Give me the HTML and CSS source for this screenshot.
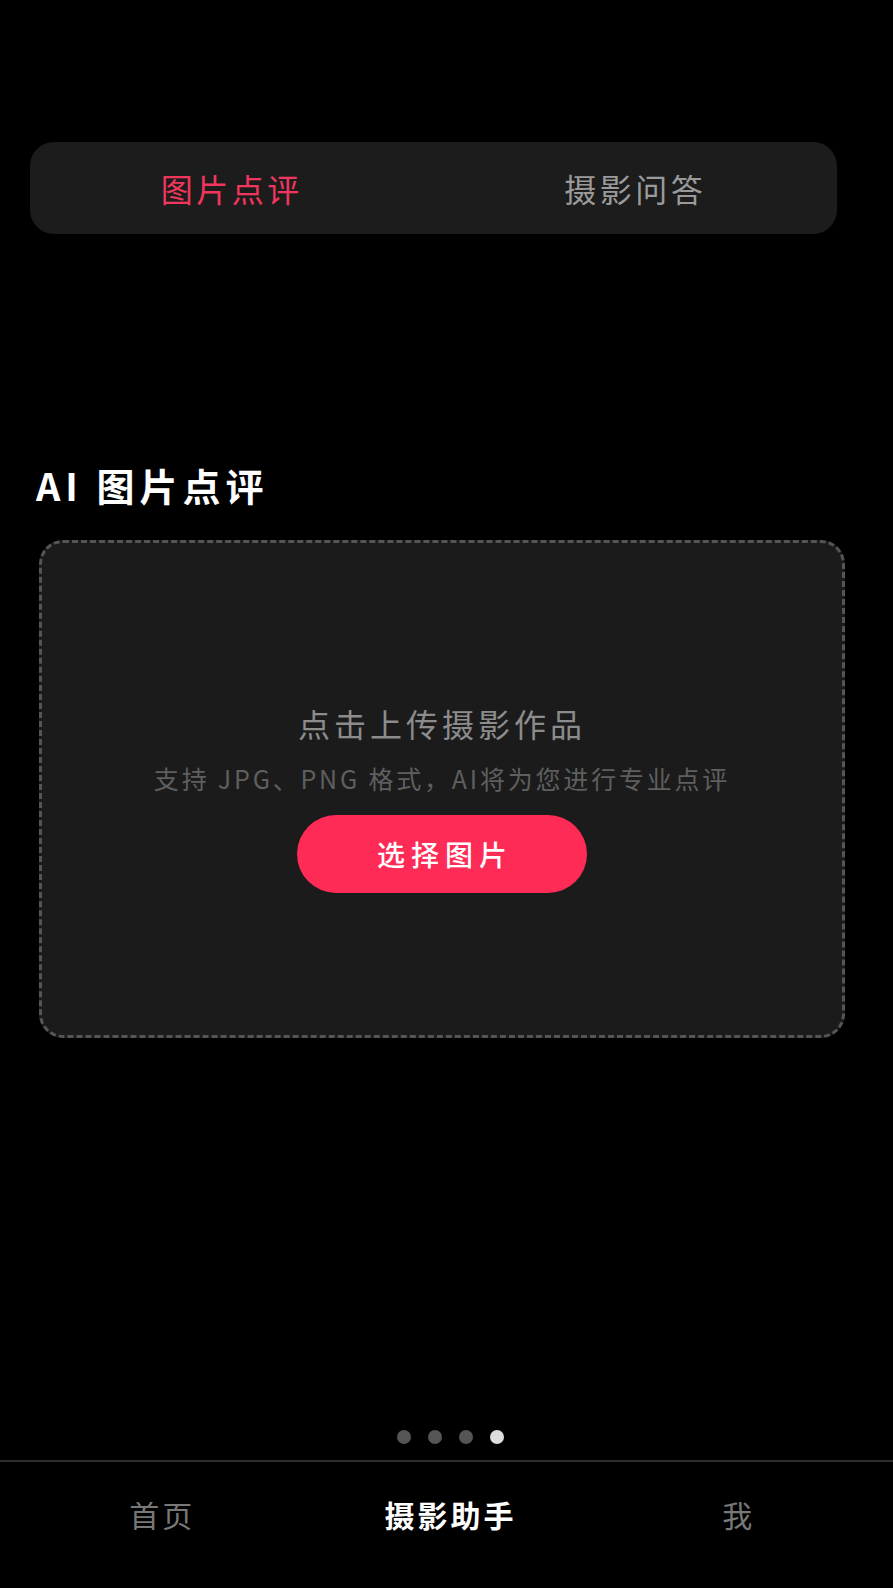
FILE: index.html
```html
<!DOCTYPE html>
<html lang="zh-CN">
<head>
  <meta charset="UTF-8">
  <title>摄影助手</title>
  <link rel="stylesheet" href="styles.css">
</head>
<body>
  <div class="app">
    <div class="tabs">
      <div class="tab active">图片点评</div>
      <div class="tab">摄影问答</div>
    </div>

    <h2 class="section-title">AI 图片点评</h2>

    <div class="upload">
      <div class="upload-title">点击上传摄影作品</div>
      <div class="upload-hint">支持 JPG、PNG 格式，AI将为您进行专业点评</div>
      <button class="pick">选择图片</button>
    </div>

    <div class="spacer"></div>

    <div class="dots">
      <span class="dot"></span>
      <span class="dot"></span>
      <span class="dot"></span>
      <span class="dot on"></span>
    </div>

    <nav class="bottom-nav">
      <div class="nav-item">首页</div>
      <div class="nav-item current">摄影助手</div>
      <div class="nav-item">我</div>
    </nav>
  </div>
</body>
</html>
```

FILE: styles.css
```css
html, body {
  margin: 0;
  padding: 0;
  background: #000;
}

body {
  font-family: "Noto Sans CJK SC", "Noto Sans", sans-serif;
  color: #fff;
}

.app {
  width: 893px;
  height: 1588px;
  display: flex;
  flex-direction: column;
  box-sizing: border-box;
  padding-top: 142px;
}

.tabs {
  margin: 0 56px 0 30px;
  height: 92px;
  background: #1c1c1c;
  border-radius: 24px;
  display: flex;
  align-items: center;
}

.tab {
  flex: 1;
  text-align: center;
  font-size: 32px;
  color: #9a9a9a;
  letter-spacing: 3.5px;
}

.tab.active {
  color: #f0365d;
}

.section-title {
  margin: 227px 0 0 36px;
  font-size: 38px;
  font-weight: 700;
  line-height: 48px;
  letter-spacing: 5px;
}

.upload {
  margin: 31px 48px 0 39px;
  height: 498px;
  box-sizing: border-box;
  background: #1b1b1b;
  border: 3px dashed #555;
  border-radius: 24px;
  display: flex;
  flex-direction: column;
  align-items: center;
  padding-top: 158px;
}

.upload-title {
  font-size: 32px;
  color: #8c8c8c;
  line-height: 44px;
  letter-spacing: 4px;
}

.upload-hint {
  margin-top: 16px;
  font-size: 25px;
  color: #5f5f5f;
  line-height: 34px;
  letter-spacing: 2.8px;
}

.pick {
  margin-top: 20px;
  width: 290px;
  height: 78px;
  border: none;
  border-radius: 39px;
  background: #fd2b55;
  color: #fff;
  font-family: inherit;
  font-size: 28px;
  font-weight: 500;
  letter-spacing: 6px;
  padding-left: 12px;
}

.spacer {
  flex: 1;
}

.dots {
  display: flex;
  justify-content: center;
  gap: 17px;
  padding-left: 8px;
  margin-bottom: 16px;
}

.dot {
  width: 14px;
  height: 14px;
  border-radius: 50%;
  background: #555;
}

.dot.on {
  background: #ddd;
}

.bottom-nav {
  border-top: 2px solid #2e2e2e;
  height: 128px;
  display: flex;
  align-items: flex-start;
  padding: 30px 10px 0 18px;
  box-sizing: border-box;
}

.nav-item {
  flex: 1;
  text-align: center;
  font-size: 30px;
  color: #787878;
  letter-spacing: 3px;
}

.nav-item.current {
  color: #fff;
  font-weight: 700;
}
```
